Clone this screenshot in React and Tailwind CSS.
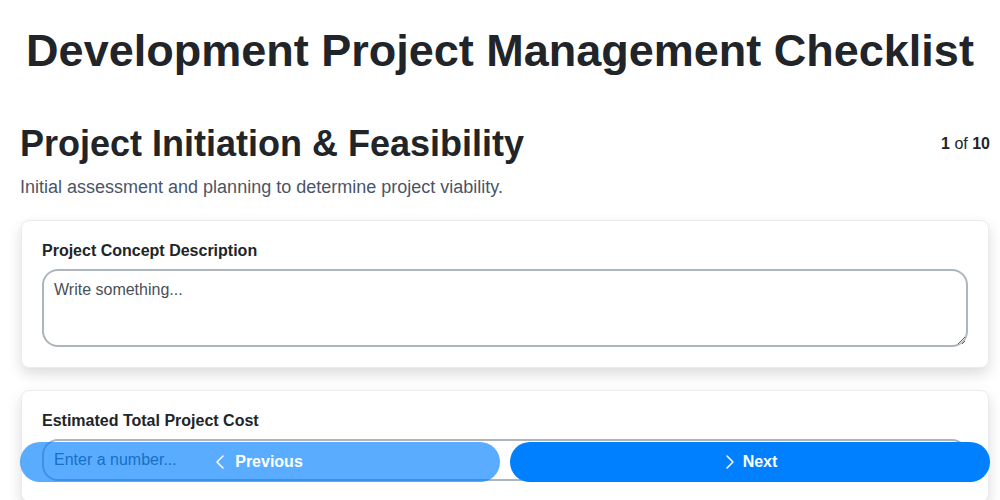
import { ChevronLeft, ChevronRight } from 'lucide-react';

const sans = { fontFamily: '"Liberation Sans", Arial, sans-serif' };

const Field = ({ label, children }) => (
  <div className="mx-px bg-white border border-[#e9ecef] rounded-lg shadow-[0_6px_14px_rgba(0,0,0,0.14)] px-5 pt-5 pb-5 mb-[22px]">
    <label className="block text-[16px] font-bold text-[#212529] mb-2 leading-5">{label}</label>
    {children}
  </div>
);

export default function App() {
  return (
    <div className="min-h-[500px] bg-white text-[#212529] pl-5 pr-[10px]" style={sans}>
      {/* Title */}
      <h1 className="text-center text-[45px] font-bold leading-none pt-[28px] pb-[49px] pr-[10px] text-[#212529]">
        Development Project Management Checklist
      </h1>

      {/* Section header */}
      <div className="flex items-start justify-between">
        <h2 className="text-[36px] font-bold leading-[44px] text-[#212529]">Project Initiation &amp; Feasibility</h2>
        <div className="text-[16px] text-[#212529] pt-[10px]">
          <span className="font-bold">1</span> of <span className="font-bold">10</span>
        </div>
      </div>
      <p className="text-[18px] text-[#4a5568] mt-[9px] mb-[21px] leading-6">
        Initial assessment and planning to determine project viability.
      </p>

      <Field label="Project Concept Description">
        <textarea
          placeholder="Write something..."
          className="block w-full h-[78px] border-2 border-[#adb5bd] rounded-2xl px-[10px] py-[7px] text-[16px] placeholder:text-[#495057] outline-none resize-y"
          style={sans}
        />
      </Field>

      <Field label="Estimated Total Project Cost">
        <input
          type="number"
          placeholder="Enter a number..."
          className="block w-full h-[42px] border-2 border-[#adb5bd] rounded-2xl px-[10px] text-[16px] placeholder:text-[#495057] outline-none"
          style={sans}
        />
      </Field>

      {/* Navigation */}
      <div className="fixed left-[20px] right-[10px] bottom-[18px] grid grid-cols-2 gap-[10px]">
        <button className="h-[40px] rounded-full bg-[#0080ff] opacity-65 text-white font-bold text-[16px] flex items-center justify-center gap-[3px]">
          <ChevronLeft size={24} strokeWidth={1.5} className="-ml-[9px]" />
          Previous
        </button>
        <button className="h-[40px] rounded-full bg-[#0080ff] text-white font-bold text-[16px] flex items-center justify-center gap-[1px] pl-[4px]">
          <ChevronRight size={24} strokeWidth={1.5} className="-ml-[9px]" />
          Next
        </button>
      </div>
    </div>
  );
}
